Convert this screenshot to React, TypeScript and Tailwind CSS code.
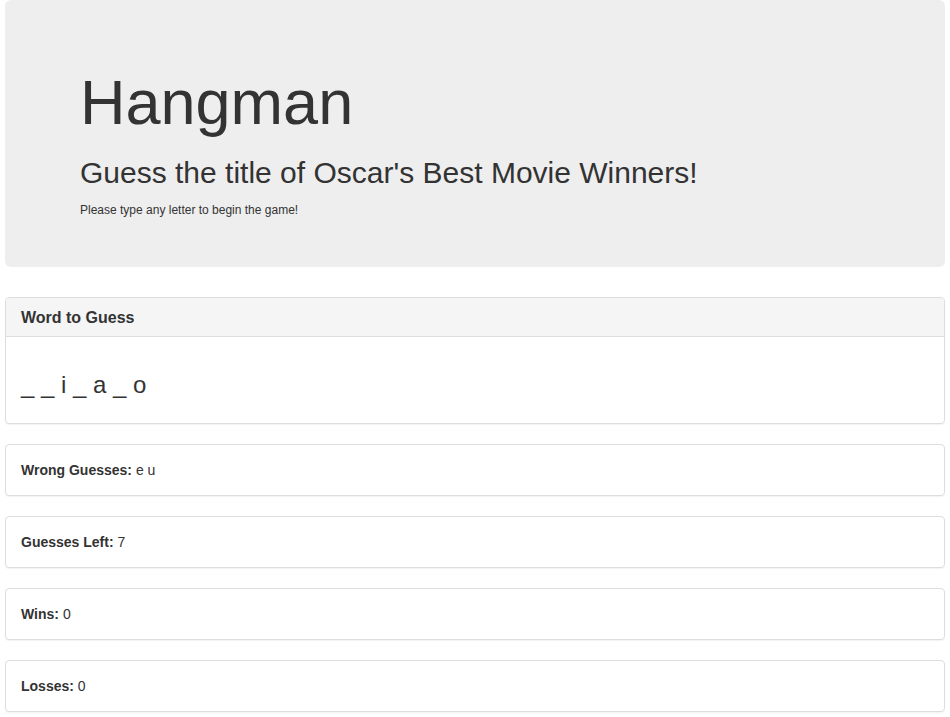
const stats = [
  { label: "Wrong Guesses:", value: "e u" },
  { label: "Guesses Left:", value: "7" },
  { label: "Wins:", value: "0" },
  { label: "Losses:", value: "0" },
];

export default function App() {
  return (
    <div className="min-h-screen bg-white text-[#333] font-['Liberation_Sans',Arial,sans-serif] text-[14px] leading-[20px]">
      <div className="w-[940px] mx-auto">
        {/* Jumbotron */}
        <div className="bg-[#eeeeee] rounded-[6px] px-[75px] pt-[68px] pb-[48px]">
          <h1 className="text-[63px] leading-[69px] font-normal">Hangman</h1>
          <h2 className="mt-[19px] text-[30px] leading-[33px] font-normal">
            Guess the title of Oscar's Best Movie Winners!
          </h2>
          <p className="mt-[13px] text-[12px] leading-[17px]">Please type any letter to begin the game!</p>
        </div>

        {/* Word panel */}
        <div className="mt-[30px] mb-[20px] border border-[#dddddd] rounded-[4px] shadow-[0_1px_1px_rgba(0,0,0,0.05)] overflow-hidden">
          <div className="bg-[#f5f5f5] border-b border-[#dddddd] px-[15px] pt-[11px] pb-[9px]">
            <h3 className="text-[16px] leading-[18px] font-bold">Word to Guess</h3>
          </div>
          <div className="p-[15px]">
            <h3 className="mt-[20px] mb-[10px] text-[24px] leading-[26px] font-normal">_ _ i _ a _ o</h3>
          </div>
        </div>

        {/* Stat panels */}
        {stats.map((s) => (
          <div
            key={s.label}
            className="mb-[20px] border border-[#dddddd] rounded-[4px] shadow-[0_1px_1px_rgba(0,0,0,0.05)] p-[15px]"
          >
            <span className="font-bold">{s.label}</span> {s.value}
          </div>
        ))}
      </div>
    </div>
  );
}
